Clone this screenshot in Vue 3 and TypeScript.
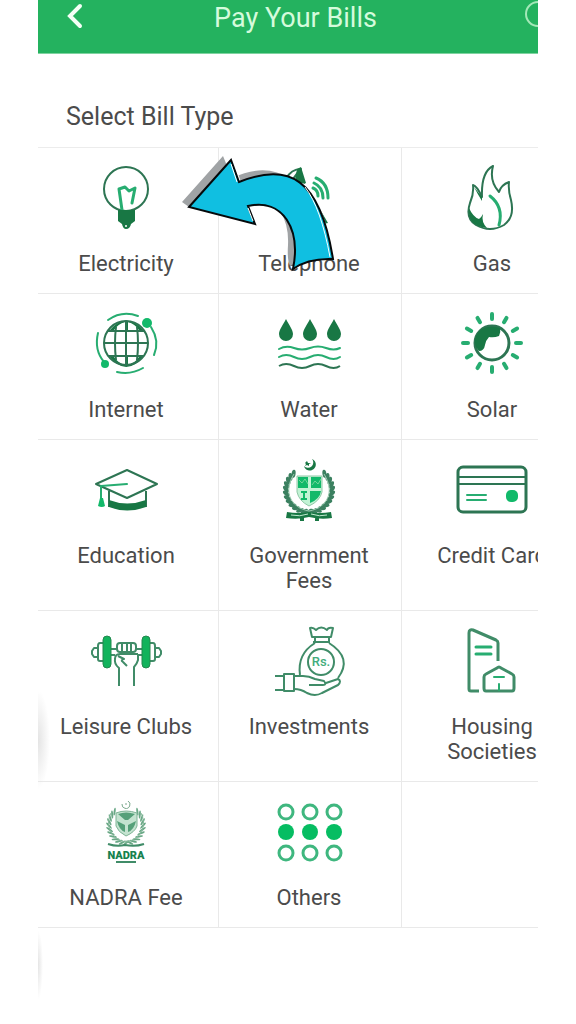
<script setup lang="ts">
interface Bill {
  id: string
  label: string
}

const bills: Bill[] = [
  { id: 'electricity', label: 'Electricity' },
  { id: 'telephone', label: 'Telephone' },
  { id: 'gas', label: 'Gas' },
  { id: 'internet', label: 'Internet' },
  { id: 'water', label: 'Water' },
  { id: 'solar', label: 'Solar' },
  { id: 'education', label: 'Education' },
  { id: 'government', label: 'Government Fees' },
  { id: 'card', label: 'Credit Card' },
  { id: 'leisure', label: 'Leisure Clubs' },
  { id: 'investments', label: 'Investments' },
  { id: 'housing', label: 'Housing Societies' },
  { id: 'nadra', label: 'NADRA Fee' },
  { id: 'others', label: 'Others' },
]

const rays = Array.from({ length: 12 }, (_, i) => i * 30)
const dotColumns = [12, 36, 60]

interface Leaf {
  x: number
  y: number
  turn: number
}

function wreath(cx: number, cy: number, rx: number, ry: number, count: number): Leaf[] {
  const leaves: Leaf[] = []
  for (let i = 0; i < count; i++) {
    const deg = -48 + (i * 276) / (count - 1)
    const rad = (deg * Math.PI) / 180
    leaves.push({
      x: Math.round((cx + rx * Math.cos(rad)) * 10) / 10,
      y: Math.round((cy + ry * Math.sin(rad)) * 10) / 10,
      turn: deg + (deg < 90 ? -50 : 50),
    })
  }
  return leaves
}

const stateWreath = wreath(35, 36, 23, 22, 25)
const nadraWreath = wreath(35, 29, 17, 18, 23)
</script>

<template>
  <div class="phone">
    <header class="bar">
      <button class="bar-button" type="button" aria-label="Back">
        <svg class="bar-icon" viewBox="0 0 36 36" aria-hidden="true">
          <path d="M24 6 L14 16 L24 26" fill="none" stroke="#f4fff6" stroke-width="4" stroke-linecap="round" />
        </svg>
      </button>
      <h1 class="title">Pay Your Bills</h1>
      <button class="bar-button help" type="button" aria-label="Help">
        <svg class="bar-icon" viewBox="0 0 36 36" aria-hidden="true">
          <circle cx="23" cy="14" r="12" fill="none" stroke="#a4e8b8" stroke-width="2" />
        </svg>
      </button>
    </header>

    <main>
      <h2 class="heading">Select Bill Type</h2>
      <ul class="grid">
        <li v-for="bill in bills" :key="bill.id" class="cell">
          <button class="tile" type="button">
            <svg class="icon" viewBox="0 0 70 70" aria-hidden="true">
              <g v-if="bill.id === 'electricity'">
                <circle class="dark" cx="35" cy="27" r="22" />
                <path class="light thick" d="M31 48 L28 27 L34 25 L38 29 L44 26 L41 41" />
                <path class="dark-fill" d="M27 48 H44 V59 L40 62 Q39 67 35 67 Q32 67 31 62 L27 59 Z" />
                <circle cx="35" cy="64" r="1" fill="#fff" />
              </g>
              <g v-else-if="bill.id === 'telephone'">
                <path class="dark" d="M12 17 Q17 7 27 7 Q10 25 16 40 Q25 58 49 60" />
                <path class="dark-fill" d="M23 7 L27 5 L32 21 L26 24 L21 18 Z M44 49 L47 49 L54 61 L49 62 Z" />
                <path class="light thick" d="M42 16 Q54 21 54 36 M40 21 Q49 25 49 36 M39 26 Q44 28 44 34" />
              </g>
              <g v-else-if="bill.id === 'gas'">
                <path class="dark" d="M36 4 Q24 10 25 35 Q20 24 16 23 Q17 32 13 41 Q8 56 19 63 Q33 71 47 63 Q58 55 54 38 Q51 28 52 20 Q44 23 42 30 Q32 19 36 4 Z" />
                <path class="light thick" d="M33 34 Q47 45 42 63" />
                <path class="dark-fill" d="M12 46 Q16 55 22 57 Q24 56 26 52 Q24 60 30 66 Q10 64 12 46 Z M17 25 L25 35 V39 Q20 31 17 25 Z" />
              </g>
              <g v-else-if="bill.id === 'internet'">
                <path class="dark-fill" d="M18 23 Q35 2 53 23 Z M18 48 Q35 70 53 48 Z" />
                <path fill="#fff" d="M23 22 Q27 16 34 14 V22 Z M37 22 V14 Q44 16 48 22 Z M23 49 Q27 55 34 57 V49 Z M37 49 V57 Q44 55 48 49 Z" />
                <circle class="dark" cx="35" cy="35" r="22" />
                <path class="dark" d="M13 35 H57 M17 23 H53 M17 48 H53 M35 13 V57 M25 19 Q23 35 25 52 M46 19 Q48 35 46 52" />
                <path class="light" d="M17 12 Q31 2 47 8 M60 19 Q69 33 63 47 M7 25 Q3 42 13 54 M26 64 Q40 67 52 60" />
                <circle class="light-fill" cx="56" cy="15" r="5" />
                <circle class="light-fill" cx="14" cy="56" r="4" />
              </g>
              <g v-else-if="bill.id === 'water'">
                <path v-for="x in dotColumns" :key="x" class="dark-fill" :d="`M${x} 11 C${x + 3} 17 ${x + 7} 22 ${x + 7} 26 A7 7 0 0 1 ${x - 7} 26 C${x - 7} 22 ${x - 3} 17 ${x} 11 Z`" />
                <path class="light" d="M5 41 Q12 37 20 40 T36 40 T52 40 T66 40 M5 49 Q12 45 20 49 T36 49 T52 49 T66 49" />
                <path class="dark" d="M5 58 Q12 54 20 58 T36 58 T52 58 T66 58" />
              </g>
              <g v-else-if="bill.id === 'solar'">
                <circle class="dark thick" cx="35" cy="35" r="17" />
                <path class="dark-fill" d="M43 20 Q44 24 42 28 Q37 30 32 29 Q29 32 28 37 Q27 43 22 43 Q17 38 18 31 Q23 15 43 20 Z" />
                <path v-for="turn in rays" :key="turn" class="light ray" d="M35 6 V11" :transform="`rotate(${turn} 35 35)`" />
              </g>
              <g v-else-if="bill.id === 'education'">
                <path class="dark" d="M5 30 L36 16 L66 30 L36 44 Z M18 37 V53 M55 37 V53" />
                <path class="dark-fill" d="M18 46 Q36 53 55 46 V53 Q36 60 18 53 Z" />
                <path class="light" d="M36 30 L10 32 V47" />
                <path class="light-fill" d="M9 44 H12 L14 52 Q11 54 7 52 Z" />
              </g>
              <g v-else-if="bill.id === 'government'">
                <path class="dark-fill" d="M38 5 A6 6 0 1 1 30 12 A5 5 0 1 0 38 5 Z M33 7 L34 9 L37 9 L35 10 L35 12 L33 11 L31 12 L32 10 L31 9 Z" />
                <ellipse v-for="(leaf, i) in stateWreath" :key="i" fill="#3b8060" rx="4" ry="2" :transform="`translate(${leaf.x} ${leaf.y}) rotate(${leaf.turn})`" />
                <path fill="none" stroke="#9ccbb0" d="M20 20 C8 39 18 54 35 57 C52 54 62 39 50 20" />
                <path d="M23 22 H48 V38 Q46 47 35 52 Q25 47 23 38 Z" fill="#c2f3d5" stroke="#8fc8a6" />
                <path class="light-fill" d="M24 23 H34 V34 H24 Z M37 23 H47 V34 H37 Z M36 37 H47 Q46 45 36 49 Z M27 37 H33 V39 H31 V44 H33 V46 H27 V44 H29 V39 H27 Z" />
                <path d="M25 26 L28 29 L31 25 L34 30 M38 31 L41 27 L44 30 L47 25" fill="none" stroke="#72d59a" />
                <path class="dark-fill" d="M13 58 Q24 60 35 58 Q46 60 57 58 L58 64 Q47 66 35 63 Q24 66 12 64 Z M26 64 H30 V67 H26 Z M41 64 H45 V67 H41 Z" />
                <path d="M17 61 Q26 63 34 60 M37 60 Q46 63 53 61" fill="none" stroke="#bfe9cf" />
              </g>
              <g v-else-if="bill.id === 'card'">
                <rect class="dark thick" x="1" y="13" width="68" height="45" rx="5" />
                <path class="dark" d="M1 23 H69 M1 30 H69" />
                <path class="light" d="M10 41 H29 M10 46 H29" />
                <rect class="light-fill" x="49" y="36" width="12" height="12" rx="5" />
              </g>
              <g v-else-if="bill.id === 'leisure'">
                <path class="mid" d="M12 18 H9 Q7 18 7 21 V34 Q7 36 9 36 H12 M7 23 H3 L1 26 V29 L3 32 H7 M59 18 H62 Q64 18 64 21 V34 Q64 36 62 36 H59 M64 23 H68 L70 26 V29 L68 32 H64 M20 24 H26 M20 30 H24 M45 24 H51 M47 30 H51" />
                <rect class="plate" x="12" y="11" width="8" height="32" rx="4" />
                <rect class="plate" x="51" y="11" width="8" height="32" rx="4" />
                <rect class="mid" x="26" y="18" width="19" height="9" rx="3" />
                <path class="mid" d="M31 19 V26 M36 19 V26 M40 19 V26 M47 29 H29 Q24 29 24 34 Q23 39 28 43 V61 M47 29 V35 Q46 39 43 42 V61 M27 31 L33 34 Q29 35 32 37 L36 41" />
              </g>
              <g v-else-if="bill.id === 'investments'">
                <path class="mid" d="M36 3 L38 12 H57 L59 3 Q54 2 53 5 Q47 0 42 5 Q39 2 36 3 Z M41 12 V17 M55 12 V17 M39 17 H56 M41 18 Q23 29 26 50 M55 18 Q79 33 64 53" />
                <circle class="mid" cx="47" cy="37" r="13" />
                <text class="rupee" x="47" y="41">Rs.</text>
                <rect class="mid" x="10" y="49" width="10" height="17" />
                <path class="mid" d="M1 51 H10 M1 65 H10 M20 51 H29 Q35 51 41 54 L50 56 Q53 60 49 60 H35 M52 58 L64 54 Q68 56 64 60 L48 68 Q41 72 33 68 Q27 64 20 64" />
              </g>
              <g v-else-if="bill.id === 'housing'">
                <path class="mid thick" d="M22 66 H14 Q12 66 12 64 V8 Q12 4 16 5 L39 15 Q41 16 41 18 V36" />
                <path class="mid thick" d="M29 66 Q27 66 27 63 V52 Q27 50 29 49 L40 43 Q42 41 44 43 L55 49 Q57 50 57 52 V63 Q57 66 55 66 Z" />
                <path class="light thick" d="M19 22 H34 M19 29 H34" />
                <path class="light" d="M37 52 H47 M42 59 V65" />
              </g>
              <g v-else-if="bill.id === 'nadra'">
                <path fill="none" stroke="#7aa88c" d="M37 5 A4 4 0 1 1 31 8 M35 7 V9" />
                <ellipse v-for="(leaf, i) in nadraWreath" :key="i" fill="#6aa886" rx="4" ry="1" :transform="`translate(${leaf.x} ${leaf.y}) rotate(${leaf.turn})`" />
                <path d="M20 17 C13 31 22 44 35 46 C48 44 57 31 50 17" fill="none" stroke="#85b99b" />
                <path d="M25 17 Q35 13 46 17 V30 Q44 36 35 40 Q27 36 25 30 Z" fill="#c4e3d0" stroke="#7fb496" />
                <path fill="#55a079" d="M27 18 Q35 15 44 18 L37 24 H34 Z M26 25 L34 29 V36 Q28 34 26 25 Z M45 25 L37 29 V36 Q43 34 45 25 Z" />
                <path class="mid" d="M17 48 Q26 51 34 49 Q44 51 53 48" />
                <text class="nadra" x="35" y="63">NADRA</text>
                <path class="mid" d="M25 66 H45" />
              </g>
              <g v-else>
                <g v-for="x in dotColumns" :key="x">
                  <circle class="ring" :cx="x" cy="16" r="7" />
                  <circle :cx="x" cy="36" r="8" fill="#06bd62" />
                  <circle class="ring" :cx="x" cy="57" r="7" />
                </g>
              </g>
            </svg>
            <span class="label">{{ bill.label }}</span>
          </button>
        </li>
        <li class="cell"></li>
      </ul>
    </main>

    <svg class="pointer" viewBox="180 150 160 125" aria-hidden="true">
      <path fill="#a0a3a5" d="M182 202 L223 156 L232 178 Q266 162 290 179 L300 220 L298 262 L290 266 Q287 260 288 245 Q289 225 280 211 L240 190 L189 207 Z" />
      <path fill="#fff" d="M228 163 L233 160 L241 182 L237 185 Z M300 185 Q320 208 330 259 L333 259 Q326 205 303 183 Z M246 208 L251 206 L257 224 L252 223 Z" />
      <path class="pointer-face" d="M189 207 L231 160 L239 182 C289 162 320 178 333 259 Q308 258 293 269 C301 229 283 198 248 206 L255 224 Z" />
      <path fill="none" stroke="#fff" d="M231 164 L237 182 M305 187 Q321 208 330 257 M248 208 L253 221" />
    </svg>
    <div class="edge"></div>
    <div class="edge edge-low"></div>
  </div>
</template>

<style>
html,
body {
  background: #fff;
}
</style>

<style scoped>
.phone {
  position: relative;
  min-height: 100vh;
  margin: 0 38px;
  overflow: hidden;
  background: #fff;
  font-family: Roboto, "Liberation Sans", sans-serif;
  color: #4b4b4b;
}

.bar {
  display: flex;
  padding: 0 0 17px 18px;
  background: #24b25f;
  border-bottom: 1px solid #7fd3a0;
}

button {
  padding: 0;
  border: 0;
  background: none;
  color: inherit;
  font: inherit;
}

.bar-button {
  flex: none;
  width: 36px;
  height: 36px;
}

.help {
  width: 52px;
  margin-right: -13px;
  text-align: right;
}

.bar-icon {
  display: inline-block;
  width: 36px;
  height: 36px;
}

.title {
  flex: 1;
  margin: 0;
  color: #d5fbdc;
  font-size: 27px;
  font-weight: 400;
  line-height: 36px;
  text-align: center;
  white-space: nowrap;
}

.heading {
  margin: 0;
  padding: 46px 28px 14px;
  border-bottom: 1px solid #ececec;
  font-size: 25px;
  font-weight: 400;
  line-height: 33px;
}

.grid {
  display: grid;
  grid-template-columns: repeat(3, 1fr);
  margin: 0 -47px 0 -2px;
  padding: 0;
  list-style: none;
}

.cell {
  border-right: 1px solid #e9e9e9;
  border-bottom: 1px solid #e9e9e9;
}

.tile {
  display: flex;
  flex-direction: column;
  align-items: center;
  gap: 19px;
  width: 100%;
  padding: 14px 2px 17px 0;
}

.icon {
  display: block;
  width: 70px;
  height: 70px;
  overflow: visible;
}

.label {
  max-width: 140px;
  font-size: 22px;
  line-height: 25px;
  text-align: center;
}

.dark,
.mid,
.light {
  fill: none;
  stroke-width: 2;
  stroke-linejoin: round;
}

.dark {
  stroke: #2d7553;
}

.mid {
  stroke: #408c68;
}

.light {
  stroke: #27ad71;
  stroke-linecap: round;
}

.thick {
  stroke-width: 3;
}

.ray {
  stroke-width: 4;
}

.ring {
  fill: none;
  stroke: #3fb77f;
  stroke-width: 3;
}

.dark-fill {
  fill: #187744;
}

.light-fill {
  fill: #12b96a;
}

.plate {
  fill: #12b35c;
  stroke: #23884f;
}

.rupee {
  fill: #43ad7c;
  font-size: 13px;
  font-weight: 500;
  text-anchor: middle;
}

.nadra {
  fill: #16814e;
  font-size: 11px;
  font-weight: 900;
  text-anchor: middle;
}

.pointer {
  position: absolute;
  top: 150px;
  left: 142px;
  width: 160px;
  height: 125px;
  pointer-events: none;
}

.pointer-face {
  fill: #10bfe1;
  stroke: #05090b;
  stroke-width: 2;
  stroke-linejoin: miter;
}

.edge {
  position: absolute;
  top: 690px;
  left: 0;
  width: 12px;
  height: 100px;
  background: radial-gradient(ellipse at left, #e4e4e4, transparent 70%);
  pointer-events: none;
}

.edge-low {
  top: 930px;
  width: 5px;
  height: 70px;
}
</style>
